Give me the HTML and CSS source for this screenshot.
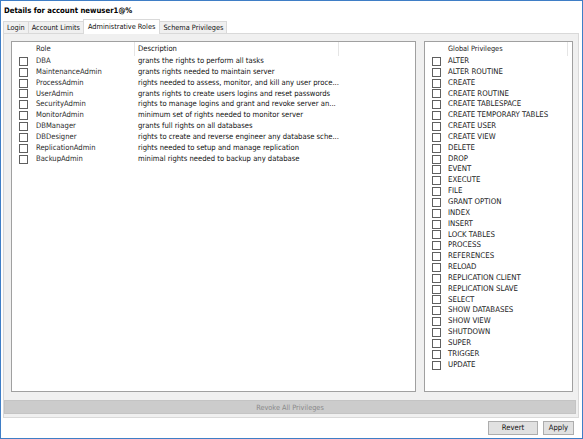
FILE: index.html
```html
<!DOCTYPE html>
<html>
<head>
<meta charset="utf-8">
<link rel="stylesheet" href="styles.css">
</head>
<body>
<div class="window">
  <div class="title">Details for account newuser1@%</div>
  <div class="tabs">
    <div class="tab">Login</div>
    <div class="tab">Account Limits</div>
    <div class="tab active">Administrative Roles</div>
    <div class="tab">Schema Privileges</div>
  </div>
  <div class="panel">
    <div class="lists">
      <div class="listbox roles">
        <div class="row hdr"><div class="c0"></div><div class="c1">Role</div><div class="c2">Description</div><div></div></div>
        <div class="row"><div class="c0"><span class="cb"></span></div><div class="c1">DBA</div><div class="c2">grants the rights to perform all tasks</div></div>
        <div class="row"><div class="c0"><span class="cb"></span></div><div class="c1">MaintenanceAdmin</div><div class="c2">grants rights needed to maintain server</div></div>
        <div class="row"><div class="c0"><span class="cb"></span></div><div class="c1">ProcessAdmin</div><div class="c2">rights needed to assess, monitor, and kill any user proce...</div></div>
        <div class="row"><div class="c0"><span class="cb"></span></div><div class="c1">UserAdmin</div><div class="c2">grants rights to create users logins and reset passwords</div></div>
        <div class="row"><div class="c0"><span class="cb"></span></div><div class="c1">SecurityAdmin</div><div class="c2">rights to manage logins and grant and revoke server an...</div></div>
        <div class="row"><div class="c0"><span class="cb"></span></div><div class="c1">MonitorAdmin</div><div class="c2">minimum set of rights needed to monitor server</div></div>
        <div class="row"><div class="c0"><span class="cb"></span></div><div class="c1">DBManager</div><div class="c2">grants full rights on all databases</div></div>
        <div class="row"><div class="c0"><span class="cb"></span></div><div class="c1">DBDesigner</div><div class="c2">rights to create and reverse engineer any database sche...</div></div>
        <div class="row"><div class="c0"><span class="cb"></span></div><div class="c1">ReplicationAdmin</div><div class="c2">rights needed to setup and manage replication</div></div>
        <div class="row"><div class="c0"><span class="cb"></span></div><div class="c1">BackupAdmin</div><div class="c2">minimal rights needed to backup any database</div></div>
      </div>
      <div class="listbox privs">
        <div class="row hdr"><div class="c0"></div><div class="c1">Global Privileges</div><div></div></div>
        <div class="row"><div class="c0"><span class="cb"></span></div><div class="c1">ALTER</div></div>
        <div class="row"><div class="c0"><span class="cb"></span></div><div class="c1">ALTER ROUTINE</div></div>
        <div class="row"><div class="c0"><span class="cb"></span></div><div class="c1">CREATE</div></div>
        <div class="row"><div class="c0"><span class="cb"></span></div><div class="c1">CREATE ROUTINE</div></div>
        <div class="row"><div class="c0"><span class="cb"></span></div><div class="c1">CREATE TABLESPACE</div></div>
        <div class="row"><div class="c0"><span class="cb"></span></div><div class="c1">CREATE TEMPORARY TABLES</div></div>
        <div class="row"><div class="c0"><span class="cb"></span></div><div class="c1">CREATE USER</div></div>
        <div class="row"><div class="c0"><span class="cb"></span></div><div class="c1">CREATE VIEW</div></div>
        <div class="row"><div class="c0"><span class="cb"></span></div><div class="c1">DELETE</div></div>
        <div class="row"><div class="c0"><span class="cb"></span></div><div class="c1">DROP</div></div>
        <div class="row"><div class="c0"><span class="cb"></span></div><div class="c1">EVENT</div></div>
        <div class="row"><div class="c0"><span class="cb"></span></div><div class="c1">EXECUTE</div></div>
        <div class="row"><div class="c0"><span class="cb"></span></div><div class="c1">FILE</div></div>
        <div class="row"><div class="c0"><span class="cb"></span></div><div class="c1">GRANT OPTION</div></div>
        <div class="row"><div class="c0"><span class="cb"></span></div><div class="c1">INDEX</div></div>
        <div class="row"><div class="c0"><span class="cb"></span></div><div class="c1">INSERT</div></div>
        <div class="row"><div class="c0"><span class="cb"></span></div><div class="c1">LOCK TABLES</div></div>
        <div class="row"><div class="c0"><span class="cb"></span></div><div class="c1">PROCESS</div></div>
        <div class="row"><div class="c0"><span class="cb"></span></div><div class="c1">REFERENCES</div></div>
        <div class="row"><div class="c0"><span class="cb"></span></div><div class="c1">RELOAD</div></div>
        <div class="row"><div class="c0"><span class="cb"></span></div><div class="c1">REPLICATION CLIENT</div></div>
        <div class="row"><div class="c0"><span class="cb"></span></div><div class="c1">REPLICATION SLAVE</div></div>
        <div class="row"><div class="c0"><span class="cb"></span></div><div class="c1">SELECT</div></div>
        <div class="row"><div class="c0"><span class="cb"></span></div><div class="c1">SHOW DATABASES</div></div>
        <div class="row"><div class="c0"><span class="cb"></span></div><div class="c1">SHOW VIEW</div></div>
        <div class="row"><div class="c0"><span class="cb"></span></div><div class="c1">SHUTDOWN</div></div>
        <div class="row"><div class="c0"><span class="cb"></span></div><div class="c1">SUPER</div></div>
        <div class="row"><div class="c0"><span class="cb"></span></div><div class="c1">TRIGGER</div></div>
        <div class="row"><div class="c0"><span class="cb"></span></div><div class="c1">UPDATE</div></div>
      </div>
    </div>
    <div class="revoke">Revoke All Privileges</div>
  </div>
  <div class="footer">
    <div class="btn revert">Revert</div>
    <div class="btn apply">Apply</div>
  </div>
</div>
</body>
</html>
```
FILE: styles.css
```css
html, body {
  margin: 0;
  padding: 0;
  background: #ffffff;
}
body {
  font-family: "DejaVu Sans Condensed", "DejaVu Sans", sans-serif;
  font-stretch: condensed;
  font-size: 7.6px;
  color: #1a1a1a;
}
.window {
  width: 583px;
  height: 439px;
  box-sizing: border-box;
  border: 1px solid #3f7ec6;
  background: #ffffff;
  display: flex;
  flex-direction: column;
}
.title {
  height: 19px;
  line-height: 19px;
  padding-left: 3px;
  font-weight: bold;
  font-size: 7.7px;
  color: #000000;
}
.tabs {
  height: 13px;
  display: flex;
  align-items: flex-end;
  padding-left: 2px;
  position: relative;
  z-index: 1;
  font-size: 7.3px;
}
.tab {
  height: 11px;
  line-height: 12px;
  padding: 0 3px;
  background: #f0f0f0;
  border: 1px solid #d9d9d9;
  border-bottom: none;
  margin-right: -1px;
  color: #111111;
}
.tab.active {
  height: 14px;
  line-height: 13px;
  background: #ffffff;
  margin-bottom: -1px;
  padding: 0 4px;
}
.panel {
  margin: 0 3px 0 2px;
  height: 385px;
  box-sizing: border-box;
  border: 1px solid #d9d9d9;
  background: #f0f0f0;
  display: flex;
  flex-direction: column;
}
.lists {
  display: flex;
  gap: 8px;
  padding: 7px 5px 0 7px;
  height: 351px;
}
.listbox {
  box-sizing: border-box;
  height: 351px;
  background: #ffffff;
  border: 1px solid #a0a0a0;
  overflow: hidden;
}
.roles {
  width: 405px;
  flex: none;
}
.privs {
  flex: 1;
  font-size: 7.8px;
}
.row {
  display: grid;
  height: 10.85px;
  line-height: 10.85px;
  white-space: nowrap;
}
.roles .row {
  grid-template-columns: 21px 102px 204px 1fr;
}
.privs .row {
  grid-template-columns: 21px 122px 1fr;
}
.row > div {
  overflow: hidden;
}
.row .c1, .row .c2 {
  padding-left: 3px;
}
.privs .row .c1 {
  padding-left: 2px;
}
.row.hdr {
  height: 14px;
  line-height: 13px;
}
.row.hdr .c1, .row.hdr .c2 {
  border-right: 1px solid #e5e5e5;
}
.privs .row.hdr .c1 {
  font-size: 7.3px;
}
.roles .c1 {
  color: #2a2a2a;
}
.roles .c2 {
  color: #111111;
}
.c0 {
  display: flex;
  align-items: center;
}
.cb {
  display: block;
  width: 9px;
  height: 9px;
  box-sizing: border-box;
  margin-left: 7px;
  border: 1px solid #5f5f5f;
  background: #ffffff;
}
.revoke {
  margin: 8px 2px 0 0;
  height: 14px;
  line-height: 13px;
  box-sizing: border-box;
  background: #cccccc;
  border: 1px solid #c4c4c4;
  text-align: center;
  color: #8a8a8a;
  font-size: 7.3px;
}
.footer {
  flex: 1;
  display: flex;
  justify-content: flex-end;
  align-items: center;
  gap: 5px;
  padding-right: 8px;
}
.btn {
  height: 14px;
  line-height: 12px;
  box-sizing: border-box;
  background: #e1e1e1;
  border: 1px solid #adadad;
  text-align: center;
  color: #111111;
}
.revert {
  width: 50px;
}
.apply {
  width: 31px;
}
```
